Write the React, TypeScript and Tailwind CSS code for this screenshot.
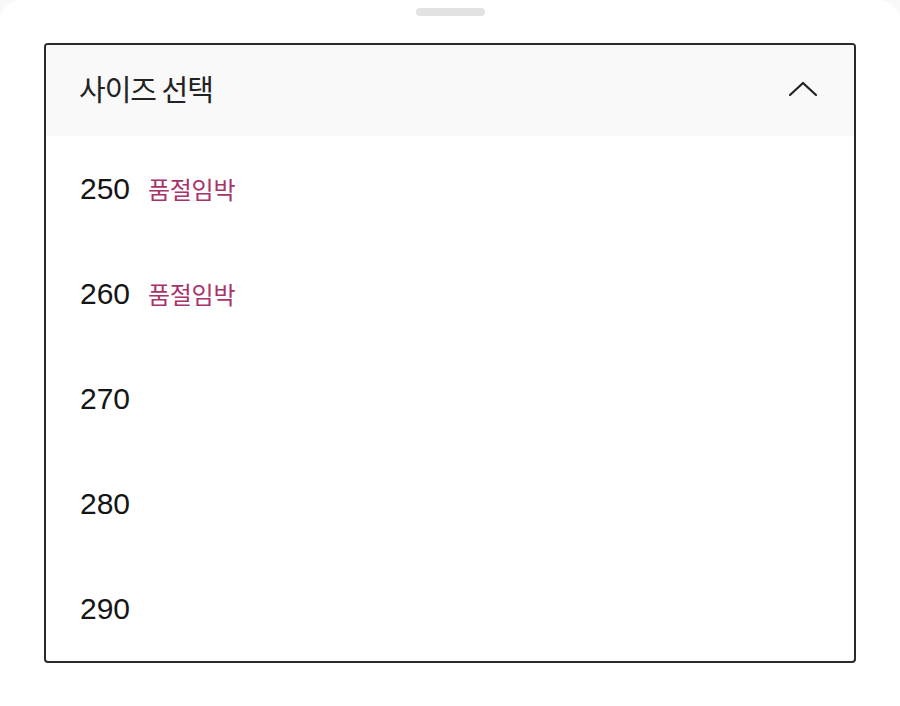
import React from 'react';

interface SizeOption {
  size: number;
  lowStock?: boolean;
}

const sizes: SizeOption[] = [
  { size: 250, lowStock: true },
  { size: 260, lowStock: true },
  { size: 270 },
  { size: 280 },
  { size: 290 },
];

const fontStack = { fontFamily: '"Noto Sans CJK KR", "Noto Sans", sans-serif' };
const numStack = { fontFamily: '"Liberation Sans", Arial, sans-serif' };

const ChevronUp = () => (
  <svg width="30" height="16" viewBox="0 0 30 16" fill="none">
    <path d="M2 14 L15 2 L28 14" stroke="#222" strokeWidth="2.2" strokeLinecap="round" strokeLinejoin="round" />
  </svg>
);

const App = () => {
  return (
    <div className="w-[900px] h-[706px] bg-[#f9f9f9] overflow-hidden">
      <div className="h-full bg-white rounded-t-[22px] flex flex-col items-center">
        <div className="mt-2 w-[69px] h-[8px] rounded-full bg-[#e2e2e2]"></div>

        <div className="mt-[27px] w-[812px] border-2 border-[#2a2a2a] rounded-[4px] overflow-hidden">
          <div className="h-[91px] bg-[#f9f9f9] flex items-center justify-between pl-[33px] pr-[36px]">
            <span className="-mt-[4px] text-[29px] text-[#222] tracking-[-1px] leading-none" style={fontStack}>
              사이즈 선택
            </span>
            <span className="-mt-[4px]">
              <ChevronUp />
            </span>
          </div>

          {sizes.map((s) => (
            <div key={s.size} className="h-[105px] flex items-center pl-[34px] gap-[18px]">
              <span className="text-[30px] text-[#151515] leading-none" style={numStack}>
                {s.size}
              </span>
              {s.lowStock && (
                <span className="text-[24px] text-[#a8336a] leading-none tracking-[-0.3px]" style={fontStack}>
                  품절임박
                </span>
              )}
            </div>
          ))}
        </div>
      </div>
    </div>
  );
};

export default App;
